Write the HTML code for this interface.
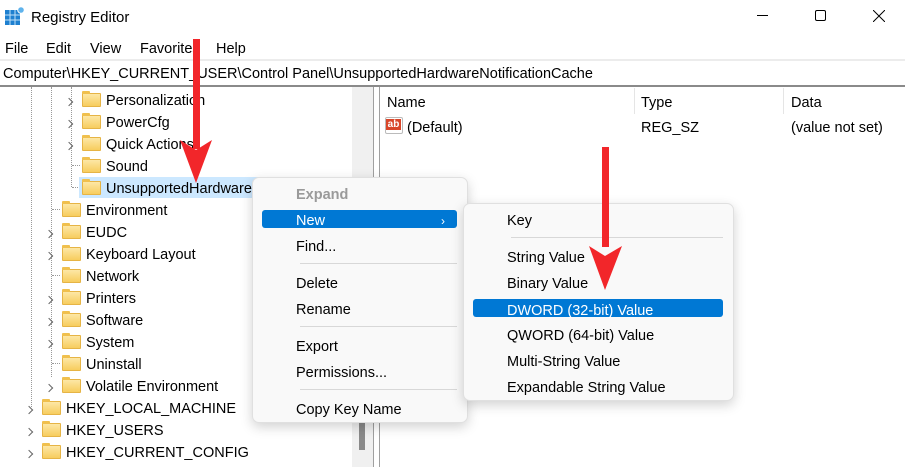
<!DOCTYPE html>
<html><head><meta charset="utf-8"><style>
*{margin:0;padding:0;box-sizing:border-box}
body{width:905px;height:467px;overflow:hidden;background:#fff;font-family:"Liberation Sans",sans-serif;font-size:14.5px;line-height:25px;color:#000;position:relative}
.a{position:absolute;white-space:nowrap}
.f{position:absolute;width:19px;height:14px;background:linear-gradient(#fde7a6,#f7cd5e);border:1px solid #e6b445;border-radius:1px}
.f:before{content:"";position:absolute;left:-1px;top:-3px;width:8px;height:3px;background:#f0c04e;border-radius:1px 1px 0 0}
.c{position:absolute;width:6px;height:6px;border-right:1.3px solid #666;border-bottom:1.3px solid #666;transform:rotate(-45deg);margin-top:3px}
.dv{position:absolute;border-left:1px dotted #999}
.dh{position:absolute;border-top:1px dotted #999;width:8px}
.menu{position:absolute;background:#f9f9f9;border:1px solid #e0e0e0;border-radius:7px;box-shadow:0 4px 12px rgba(0,0,0,.18)}
.sep{position:absolute;height:1px;background:#d8d8d8}
</style></head><body>
<svg class="a" style="left:5px;top:6px" width="20" height="20" viewBox="0 0 20 20"><rect x="0" y="4" width="15" height="15" fill="#1e80d0"/><g stroke="#bfe0f8" stroke-width="1"><line x1="5" y1="4" x2="5" y2="19"/><line x1="10" y1="4" x2="10" y2="19"/><line x1="0" y1="9" x2="15" y2="9"/><line x1="0" y1="14" x2="15" y2="14"/></g><circle cx="16" cy="4" r="3.3" fill="#5fb3ec" stroke="#fff" stroke-width="1"/></svg>
<div class="a" style="left:31px;top:5px;font-size:15px">Registry Editor</div>
<div class="a" style="left:757px;top:15px;width:11px;height:1px;background:#000"></div>
<div class="a" style="left:815px;top:10px;width:11px;height:11px;border:1px solid #000;border-radius:2px"></div>
<svg class="a" style="left:873px;top:10px" width="12" height="12"><path d="M0 0L12 12M12 0L0 12" stroke="#000" stroke-width="1"/></svg>
<div class="a" style="left:5px;top:37px">File</div>
<div class="a" style="left:46px;top:37px">Edit</div>
<div class="a" style="left:90px;top:37px">View</div>
<div class="a" style="left:140px;top:37px">Favorites</div>
<div class="a" style="left:216px;top:37px">Help</div>
<div class="a" style="left:0;top:59px;width:905px;height:2px;background:#ececec"></div>
<div class="a" style="left:3px;top:62px">Computer\HKEY_CURRENT_USER\Control Panel\UnsupportedHardwareNotificationCache</div>
<div class="a" style="left:0;top:85px;width:905px;height:2px;background:#8a8a8a"></div>
<div class="a" style="left:352px;top:87px;width:21px;height:380px;background:#f0f0f0"></div>
<div class="a" style="left:359px;top:423px;width:6px;height:27px;background:#8a8a8a"></div>
<div class="a" style="left:373px;top:87px;width:1px;height:380px;background:#a0a0a0"></div>
<div class="a" style="left:379px;top:87px;width:1px;height:380px;background:#a0a0a0"></div>
<div class="dv" style="left:31px;top:87px;height:320px"></div>
<div class="dv" style="left:51px;top:87px;height:290px"></div>
<div class="dv" style="left:71px;top:87px;height:100px"></div>
<div class="dh" style="left:72px;top:165px"></div>
<div class="dh" style="left:72px;top:187px"></div>
<div class="dh" style="left:52px;top:209px"></div>
<div class="dh" style="left:52px;top:275px"></div>
<div class="dh" style="left:52px;top:363px"></div>
<div class="a" style="left:79px;top:177px;width:273px;height:21px;background:#cce8ff"></div>
<div class="c" style="left:66px;top:96px"></div><div class="f" style="left:82px;top:93px"></div><div class="a" style="left:106px;top:89px">Personalization</div>
<div class="c" style="left:66px;top:118px"></div><div class="f" style="left:82px;top:115px"></div><div class="a" style="left:106px;top:111px">PowerCfg</div>
<div class="c" style="left:66px;top:140px"></div><div class="f" style="left:82px;top:137px"></div><div class="a" style="left:106px;top:133px">Quick Actions</div>
<div class="f" style="left:82px;top:159px"></div><div class="a" style="left:106px;top:155px">Sound</div>
<div class="f" style="left:82px;top:181px"></div><div class="a" style="left:106px;top:177px">UnsupportedHardwareNotificationCache</div>
<div class="f" style="left:62px;top:203px"></div><div class="a" style="left:86px;top:199px">Environment</div>
<div class="c" style="left:46px;top:228px"></div><div class="f" style="left:62px;top:225px"></div><div class="a" style="left:86px;top:221px">EUDC</div>
<div class="c" style="left:46px;top:250px"></div><div class="f" style="left:62px;top:247px"></div><div class="a" style="left:86px;top:243px">Keyboard Layout</div>
<div class="f" style="left:62px;top:269px"></div><div class="a" style="left:86px;top:265px">Network</div>
<div class="c" style="left:46px;top:294px"></div><div class="f" style="left:62px;top:291px"></div><div class="a" style="left:86px;top:287px">Printers</div>
<div class="c" style="left:46px;top:316px"></div><div class="f" style="left:62px;top:313px"></div><div class="a" style="left:86px;top:309px">Software</div>
<div class="c" style="left:46px;top:338px"></div><div class="f" style="left:62px;top:335px"></div><div class="a" style="left:86px;top:331px">System</div>
<div class="f" style="left:62px;top:357px"></div><div class="a" style="left:86px;top:353px">Uninstall</div>
<div class="c" style="left:46px;top:382px"></div><div class="f" style="left:62px;top:379px"></div><div class="a" style="left:86px;top:375px">Volatile Environment</div>
<div class="c" style="left:26px;top:404px"></div><div class="f" style="left:42px;top:401px"></div><div class="a" style="left:66px;top:397px">HKEY_LOCAL_MACHINE</div>
<div class="c" style="left:26px;top:426px"></div><div class="f" style="left:42px;top:423px"></div><div class="a" style="left:66px;top:419px">HKEY_USERS</div>
<div class="c" style="left:26px;top:448px"></div><div class="f" style="left:42px;top:445px"></div><div class="a" style="left:66px;top:441px">HKEY_CURRENT_CONFIG</div>
<div class="a" style="left:387px;top:91px">Name</div>
<div class="a" style="left:634px;top:88px;width:1px;height:26px;background:#e5e5e5"></div>
<div class="a" style="left:641px;top:91px">Type</div>
<div class="a" style="left:783px;top:88px;width:1px;height:26px;background:#e5e5e5"></div>
<div class="a" style="left:791px;top:91px">Data</div>
<div class="a" style="left:385px;top:117px;width:18px;height:17px;border:1px solid #bbb;background:#fff;border-radius:2px"><div style="position:absolute;left:0;top:1px;width:15px;height:11px;background:#d9462a;color:#fff;font-size:10px;font-weight:bold;line-height:11px;text-align:center">ab</div></div>
<div class="a" style="left:407px;top:116px">(Default)</div>
<div class="a" style="left:641px;top:116px">REG_SZ</div>
<div class="a" style="left:791px;top:116px">(value not set)</div>
<div class="menu" style="left:252px;top:177px;width:216px;height:246px"></div>
<div class="a" style="left:296px;top:183px;color:#9a9a9a;font-weight:bold">Expand</div>
<div class="a" style="left:262px;top:210px;width:195px;height:18px;background:#0078d4;border-radius:3px"></div>
<div class="a" style="left:296px;top:209px;color:#fff">New</div>
<div class="a" style="left:441px;top:209px;color:#fff;font-size:12px">›</div>
<div class="a" style="left:296px;top:235px">Find...</div>
<div class="sep" style="left:300px;top:263px;width:157px"></div>
<div class="a" style="left:296px;top:272px">Delete</div>
<div class="a" style="left:296px;top:298px">Rename</div>
<div class="sep" style="left:300px;top:326px;width:157px"></div>
<div class="a" style="left:296px;top:335px">Export</div>
<div class="a" style="left:296px;top:361px">Permissions...</div>
<div class="sep" style="left:300px;top:389px;width:157px"></div>
<div class="a" style="left:296px;top:398px">Copy Key Name</div>
<div class="menu" style="left:463px;top:203px;width:271px;height:198px"></div>
<div class="a" style="left:507px;top:209px">Key</div>
<div class="sep" style="left:511px;top:237px;width:212px"></div>
<div class="a" style="left:507px;top:246px">String Value</div>
<div class="a" style="left:507px;top:272px">Binary Value</div>
<div class="a" style="left:473px;top:299px;width:250px;height:18px;background:#0078d4;border-radius:3px"></div>
<div class="a" style="left:507px;top:299px;color:#fff">DWORD (32-bit) Value</div>
<div class="a" style="left:507px;top:324px">QWORD (64-bit) Value</div>
<div class="a" style="left:507px;top:350px">Multi-String Value</div>
<div class="a" style="left:507px;top:376px">Expandable String Value</div>
<svg class="a" style="left:0;top:0" width="905" height="467"><g fill="#f2262a">
<rect x="193" y="39" width="7" height="110"/><path d="M180 140L196 183L212 140L196 150Z"/>
<rect x="602" y="147" width="7" height="100"/><path d="M589 246L605 290L622 246L605 256Z"/></g></svg>
</body></html>
